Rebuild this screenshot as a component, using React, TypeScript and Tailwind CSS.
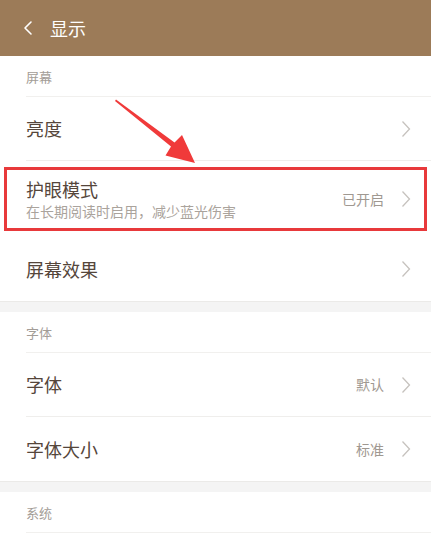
import { ChevronLeft } from "lucide-react";

interface Row {
  title: string;
  subtitle?: string;
  value?: string;
  highlight?: boolean;
}

interface Section {
  label: string;
  rows: Row[];
}

const sections: Section[] = [
  {
    label: "屏幕",
    rows: [
      { title: "亮度" },
      {
        title: "护眼模式",
        subtitle: "在长期阅读时启用，减少蓝光伤害",
        value: "已开启",
        highlight: true,
      },
      { title: "屏幕效果" },
    ],
  },
  {
    label: "字体",
    rows: [
      { title: "字体", value: "默认" },
      { title: "字体大小", value: "标准" },
    ],
  },
  { label: "系统", rows: [] },
];

function Arrow() {
  return (
    <svg width="10" height="18" viewBox="0 0 10 18" fill="none">
      <path d="M1.5 1.5 L8.5 9 L1.5 16.5" stroke="#c6c2be" strokeWidth="1.3" />
    </svg>
  );
}

function SettingRow({ row, last }: { row: Row; last: boolean }) {
  if (row.highlight) {
    return (
      <div className="px-[4px] py-[6px]">
        <div className="flex h-[64px] items-center border-[3px] border-[#e8393b] pl-[19px] pr-[13px]">
          <div className="flex-1">
            <div className="text-[18px] leading-[24px] text-[#55463b]">{row.title}</div>
            <div className="text-[14px] leading-[20px] text-[#aaa39c]">{row.subtitle}</div>
          </div>
          <span className="mr-[17px] text-[14px] text-[#9f9891]">{row.value}</span>
          <Arrow />
        </div>
      </div>
    );
  }
  return (
    <div>
      <div
        className={
          last
            ? "flex h-[64px] items-center pl-[26px] pr-[20px]"
            : "flex h-[63px] items-center pl-[26px] pr-[20px]"
        }
      >
        <div className="flex-1 text-[18px] text-[#55463b]">{row.title}</div>
        {row.value && (
          <span className="mr-[17px] text-[14px] text-[#9f9891]">{row.value}</span>
        )}
        <Arrow />
      </div>
      {!last && <div className="ml-[26px] h-px bg-[#efeeec]" />}
    </div>
  );
}

export default function App() {
  return (
    <div
      className="relative h-[538px] w-[431px] overflow-hidden bg-[#f4f4f4]"
      style={{ fontFamily: '"Noto Sans CJK SC", "Noto Sans", sans-serif' }}
    >
      <header className="flex h-[56px] items-center bg-[#9c7b58] pl-[16px] text-white">
        <ChevronLeft className="h-[24px] w-[24px]" strokeWidth={1.6} />
        <span className="ml-[10px] text-[18px]">显示</span>
      </header>

      <div className="flex flex-col gap-[10px]">
        {sections.map((s) => (
          <section key={s.label} className="border-b border-[#ebeae8] bg-white">
            <div className="flex h-[40px] items-center pl-[26px] pt-[2px] text-[13px] text-[#a39d97]">
              {s.label}
            </div>
            <div className="ml-[26px] h-px bg-[#f1f0ee]" />
            {s.rows.map((r, i) => (
              <SettingRow key={r.title} row={r} last={i === s.rows.length - 1} />
            ))}
            {s.rows.length === 0 && <div className="h-[20px]" />}
          </section>
        ))}
      </div>

      <svg className="pointer-events-none absolute left-0 top-0" width="431" height="538">
        <polygon
          points="115,101 171,146.5 165.5,155.5 195,163 182,135 174.5,142.5 116,99.5"
          fill="#f03a3a"
        />
      </svg>
    </div>
  );
}
